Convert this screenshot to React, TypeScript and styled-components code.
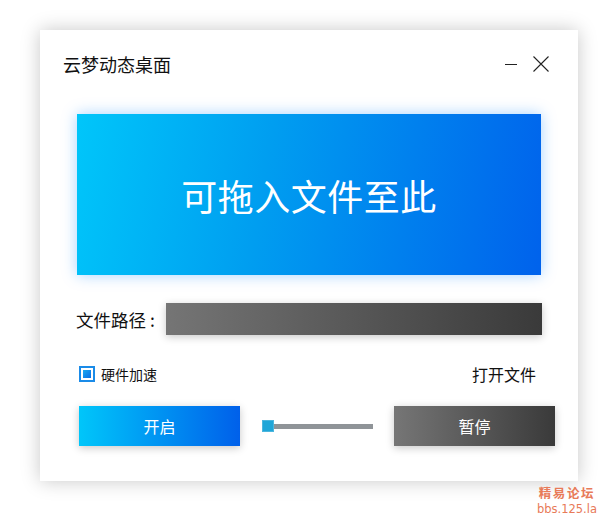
import React, { useState } from "react"
import styled, { createGlobalStyle } from "styled-components"

const GlobalStyle = createGlobalStyle`
  html, body {
    margin: 0;
    padding: 0;
    background: #fff;
    font-family: "Noto Sans CJK SC", "Noto Sans", sans-serif;
  }
`

const Page = styled.div`
  position: relative;
  width: 610px;
  height: 528px;
  overflow: hidden;
  padding: 30px 0 0 40px;
  box-sizing: border-box;
`

const Window = styled.div`
  width: 538px;
  height: 451px;
  background: #fff;
  box-shadow: 0 0 18px rgba(0, 0, 0, 0.22);
  display: flex;
  flex-direction: column;
`

const TitleBar = styled.div`
  height: 72px;
  box-sizing: border-box;
  display: flex;
  align-items: center;
  padding: 0 28px 4px 23px;
`

const Title = styled.div`
  flex: 1;
  font-size: 18px;
  color: #111;
`

const WinButton = styled.button`
  border: none;
  background: transparent;
  padding: 0;
  width: 18px;
  height: 18px;
  display: flex;
  align-items: center;
  justify-content: center;
  margin-left: 12px;
  cursor: pointer;
`

const DropZone = styled.div`
  margin: 12px 0 0 37px;
  width: 464px;
  height: 161px;
  background: linear-gradient(100deg, #00c6fa 0%, #009ef0 40%, #0062ec 100%);
  box-shadow: 0 0 14px rgba(0, 130, 255, 0.35);
  display: flex;
  align-items: center;
  justify-content: center;
  color: #fff;
  font-size: 36px;
  letter-spacing: 0.5px;
`

const PathRow = styled.div`
  margin: 28px 0 0 36px;
  display: flex;
  align-items: center;
  height: 32px;
`

const PathLabel = styled.div`
  width: 90px;
  font-size: 17.5px;
  color: #111;

  span {
    margin-left: 4px;
  }
`

const PathBar = styled.div`
  width: 376px;
  height: 32px;
  background: linear-gradient(90deg, #757575 0%, #3a3a3a 100%);
  box-shadow: 0 2px 8px rgba(0, 0, 0, 0.22);
`

const OptionRow = styled.div`
  margin: 27px 0 0 39px;
  padding-right: 42px;
  height: 24px;
  display: flex;
  align-items: center;
`

const CheckLabel = styled.label`
  flex: 1;
  display: flex;
  align-items: center;
  font-size: 14px;
  color: #111;
  cursor: pointer;
`

const CheckBox = styled.span<{ checked: boolean }>`
  width: 16px;
  height: 16px;
  box-sizing: border-box;
  border: 2px solid #1a8be8;
  padding: 2px;
  margin-right: 6px;
  display: flex;

  &::after {
    content: "";
    flex: 1;
    background: ${(p) => (p.checked ? "linear-gradient(135deg, #1aa8f0, #0a6fe6)" : "transparent")};
  }
`

const OpenLink = styled.div`
  font-size: 16px;
  color: #111;
  cursor: pointer;
`

const ButtonRow = styled.div`
  margin: 20px 0 0 39px;
  display: flex;
  align-items: center;
`

const ActionButton = styled.button<{ variant: "blue" | "gray" }>`
  width: 161px;
  height: 40px;
  border: none;
  color: #fff;
  font-family: inherit;
  font-size: 16px;
  cursor: pointer;
  background: ${(p) =>
    p.variant === "blue"
      ? "linear-gradient(90deg, #00c6fa 0%, #0060ea 100%)"
      : "linear-gradient(90deg, #767676 0%, #3a3a3a 100%)"};
  box-shadow: 0 2px 8px rgba(0, 0, 0, 0.22);
`

const Slider = styled.div`
  margin: 0 21px 0 22px;
  width: 111px;
  height: 12px;
  display: flex;
  align-items: center;
`

const Thumb = styled.div`
  width: 12px;
  height: 12px;
  box-sizing: border-box;
  background: #1fa6d8;
  border: 1px solid #4cb6de;
`

const Track = styled.div`
  flex: 1;
  height: 5px;
  background: #8f9498;
`

// forum watermark stamped over the bottom-right corner
const Watermark = styled.div`
  position: absolute;
  right: 13px;
  top: 485px;
  color: #e87a58;
  display: flex;
  flex-direction: column;
  align-items: center;
`

const WmTitle = styled.div`
  font-size: 12.5px;
  line-height: 15px;
  font-weight: bold;
  letter-spacing: 1.6px;
`

const WmUrl = styled.div`
  margin-top: 3px;
  font-family: "DejaVu Sans", sans-serif;
  font-size: 11.5px;
  line-height: 13px;
`

export default function App() {
  const [accel, setAccel] = useState(true)
  return (
    <Page>
      <GlobalStyle />
      <Window>
        <TitleBar>
          <Title>云梦动态桌面</Title>
          <WinButton aria-label="minimize">
            <svg width="14" height="14" viewBox="0 0 14 14">
              <line x1="1" y1="7.5" x2="13" y2="7.5" stroke="#222" strokeWidth="1" />
            </svg>
          </WinButton>
          <WinButton aria-label="close">
            <svg width="16" height="16" viewBox="0 0 16 16">
              <path d="M0.5 0.5 L15.5 15.5 M15.5 0.5 L0.5 15.5" stroke="#222" strokeWidth="1.1" fill="none" />
            </svg>
          </WinButton>
        </TitleBar>

        <DropZone>可拖入文件至此</DropZone>

        <PathRow>
          <PathLabel>
            文件路径<span>:</span>
          </PathLabel>
          <PathBar />
        </PathRow>

        <OptionRow>
          <CheckLabel onClick={() => setAccel(!accel)}>
            <CheckBox checked={accel} />
            硬件加速
          </CheckLabel>
          <OpenLink>打开文件</OpenLink>
        </OptionRow>

        <ButtonRow>
          <ActionButton variant="blue">开启</ActionButton>
          <Slider>
            <Thumb />
            <Track />
          </Slider>
          <ActionButton variant="gray">暂停</ActionButton>
        </ButtonRow>
      </Window>

      <Watermark>
        <WmTitle>精易论坛</WmTitle>
        <WmUrl>bbs.125.la</WmUrl>
      </Watermark>
    </Page>
  )
}
